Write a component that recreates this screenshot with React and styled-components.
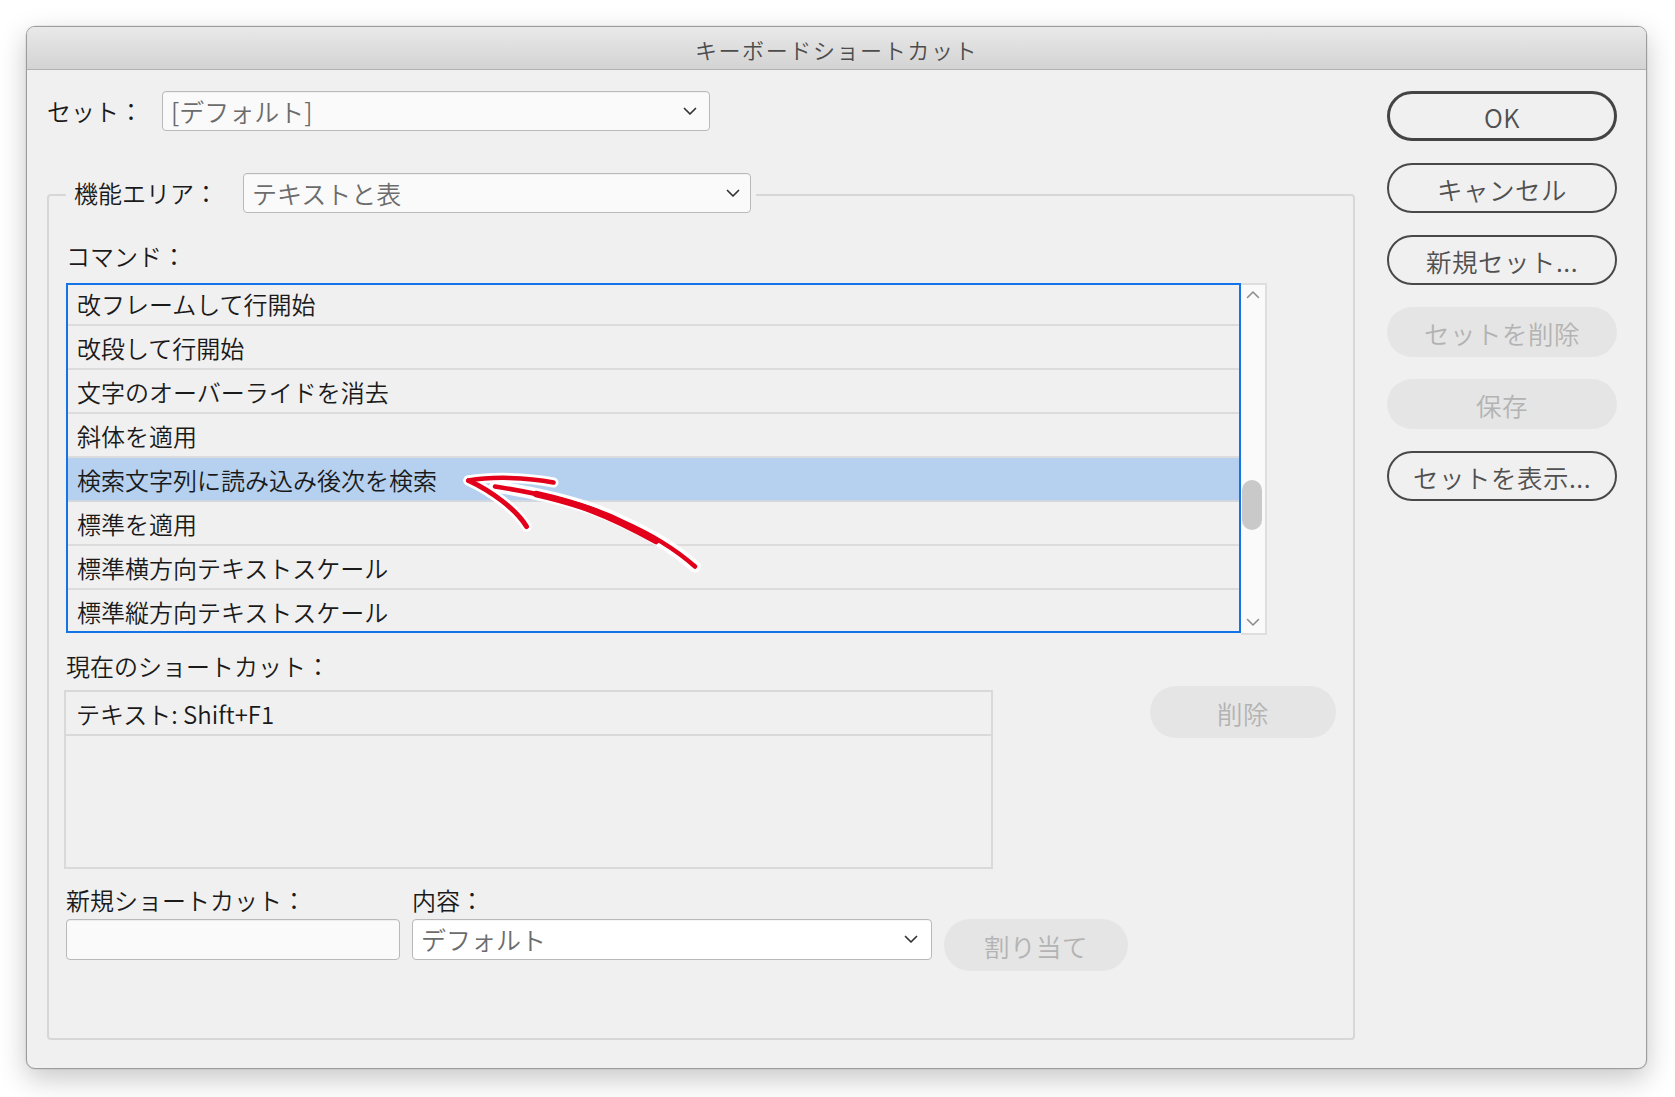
import React from "react";
import styled, { createGlobalStyle, css } from "styled-components";

const Global = createGlobalStyle`
  html, body { margin: 0; padding: 0; background: #ffffff; }
  body {
    font-family: "Noto Sans CJK JP", "Noto Sans", sans-serif;
    font-weight: 350;
    padding: 26px 0 0 26px;
    width: 1675px;
    height: 1097px;
    box-sizing: border-box;
    overflow: hidden;
  }
  * { box-sizing: border-box; }
`;

const Window = styled.div`
  width: 1621px;
  height: 1043px;
  border: 1px solid #9d9d9d;
  border-radius: 9px;
  overflow: hidden;
  background: #f0f0f0;
  box-shadow: 0 10px 28px rgba(0, 0, 0, 0.22), 0 0 0 0.5px rgba(0, 0, 0, 0.1);
  display: flex;
  flex-direction: column;
`;

const TitleBar = styled.div`
  height: 43px;
  flex: none;
  border-bottom: 1px solid #b1b1b1;
  background: linear-gradient(#e9e9e9, #d3d3d3);
  display: flex;
  align-items: center;
  justify-content: center;
  font-size: 22px;
  letter-spacing: 1.6px;
  color: #4c4c4c;
  padding-top: 1px;
`;

const Body = styled.div`
  flex: 1;
  display: flex;
  padding: 21px 29px 28px 20px;
`;

const MainCol = styled.div`
  width: 1308px;
  display: flex;
  flex-direction: column;
`;

const SideCol = styled.div`
  width: 230px;
  margin-left: 32px;
  display: flex;
  flex-direction: column;
  gap: 22px;
`;

const FieldRow = styled.div`
  display: flex;
  align-items: center;
  height: 40px;
`;

const Label = styled.span`
  font-size: 24px;
  line-height: 32px;
  color: #1a1a1a;
  white-space: nowrap;
  margin-right: ${(p) => p.$gap || 0}px;
`;

const SelectBox = styled.div`
  width: ${(p) => p.$w}px;
  height: ${(p) => p.$h || 40}px;
  background: ${(p) => (p.$white ? "#ffffff" : "#fafafa")};
  border: 1px solid #b9b9b9;
  border-radius: 4px;
  display: flex;
  align-items: center;
  padding: 0 ${(p) => p.$pr || 12}px 0 8px;
  font-size: 25px;
  color: #6c6c6c;
  box-shadow: inset 0 1px 0 rgba(0,0,0,0.04);
`;

const SelectText = styled.span`
  flex: 1;
  white-space: nowrap;
  line-height: 1;
`;

const Chevron = () => (
  <svg width="14" height="9" viewBox="0 0 14 9">
    <polyline points="1.5,1.5 7,7 12.5,1.5" fill="none" stroke="#333" strokeWidth="1.7" strokeLinecap="round" strokeLinejoin="round" />
  </svg>
);

const Group = styled.fieldset`
  flex: 1;
  margin: 42px 0 0 0;
  padding: 0 17px 0 17px;
  border: 2px solid #d7d7d7;
  border-radius: 4px;
  min-inline-size: 0;
  display: flex;
  flex-direction: column;
`;

const Legend = styled.legend`
  display: flex;
  align-items: center;
  padding: 0 5px 4px 8px;
  margin: 0;
`;

const SectionLabel = styled(Label)`
  display: block;
  margin-top: ${(p) => p.$mt}px;
`;

const ListArea = styled.div`
  position: relative;
  display: flex;
  margin-top: 11px;
  height: 352px;
`;

const ListBox = styled.div`
  width: 1175px;
  height: 350px;
  border: 2px solid #1473e6;
  overflow: hidden;
  background: #f0f0f0;
`;

const Rows = styled.div`
  margin-top: -3px;
`;

const Row = styled.div`
  height: 44px;
  border-bottom: 2px solid #dcdcdc;
  display: flex;
  align-items: center;
  padding-left: 9px;
  font-size: 24px;
  color: #1a1a1a;
  white-space: nowrap;
  ${(p) =>
    p.$selected &&
    css`
      background: #b6d1ef;
      border-bottom-color: #d3d8de;
    `}
`;

const Scrollbar = styled.div`
  width: 26px;
  height: 352px;
  background: #fafafa;
  border: 2px solid #dedede;
  border-left: none;
  display: flex;
  flex-direction: column;
  align-items: center;
  padding: 5px 0 6px;
`;

const Thumb = styled.div`
  width: 20px;
  height: 50px;
  border-radius: 10px;
  background: #c9c9c9;
  margin-top: 181px;
  margin-left: -2px;
`;

const ScrollSpacer = styled.div`
  flex: 1;
`;

const ArrowOverlay = styled.svg`
  position: absolute;
  left: 0;
  top: 0;
  width: 700px;
  height: 352px;
  overflow: visible;
  pointer-events: none;
`;

const ShortcutSection = styled.div`
  display: flex;
  align-items: flex-start;
`;

const ShortcutCol = styled.div`
  display: flex;
  flex-direction: column;
`;

const ShortcutBox = styled.div`
  width: 929px;
  height: 179px;
  margin-top: 8px;
  margin-left: -2px;
  border: 2px solid #d9d9d9;
`;

const ShortcutRow = styled.div`
  height: 44px;
  border-bottom: 2px solid #d9d9d9;
  display: flex;
  align-items: center;
  padding-left: 10px;
  font-size: 24px;
  color: #1a1a1a;
`;

const Pill = styled.div`
  width: ${(p) => p.$w || 230}px;
  height: ${(p) => p.$h || 50}px;
  border-radius: 26px;
  display: flex;
  align-items: center;
  justify-content: center;
  font-size: 25.5px;
  white-space: nowrap;
  letter-spacing: 0.5px;
  color: #505050;
  border: 2px solid #484848;
  background: transparent;
  ${(p) =>
    p.$primary &&
    css`
      border-width: 3.5px;
      border-color: #444;
    `}
  ${(p) =>
    p.$disabled &&
    css`
      border: none;
      background: #e5e5e5;
      color: #b3b3b3;
    `}
`;

const DeleteButton = styled(Pill)`
  margin-left: auto;
  margin-top: 51px;
`;

const NewGrid = styled.div`
  display: grid;
  grid-template-columns: 334px 520px 184px;
  column-gap: 12px;
  row-gap: 3px;
  margin-top: 15px;
  align-items: start;
`;

const TextInput = styled.div`
  height: 41px;
  border: 1px solid #b9b9b9;
  border-radius: 4px;
  background: #fafafa;
  box-shadow: inset 0 1px 0 rgba(0,0,0,0.05);
`;

const rows = [
  "改フレームして行開始",
  "改段して行開始",
  "文字のオーバーライドを消去",
  "斜体を適用",
  "検索文字列に読み込み後次を検索",
  "標準を適用",
  "標準横方向テキストスケール",
  "標準縦方向テキストスケール",
];

const Arrow = () => {
  const shaft = "M429,203.5 C470,210 520,220 556,238.5 C580,249 608,265 629,283.5";
  const upper = "M402.5,197.5 C425,193.5 460,194 487.5,199.5";
  const lower = "M402.5,197.5 C425,208 450,226 460.5,243.5";
  return (
    <ArrowOverlay viewBox="0 0 700 352">
      <g fill="none" stroke="#ffffff" strokeLinecap="round" strokeLinejoin="round">
        <path d={shaft} strokeWidth="12" />
        <path d={upper} strokeWidth="10" />
        <path d={lower} strokeWidth="10.5" />
      </g>
      <g fill="none" stroke="#e2001b" strokeLinecap="round" strokeLinejoin="round">
        <path d={shaft} strokeWidth="4.5" />
        <path d="M470,211 C510,220 540,230 590,258" strokeWidth="6.5" />
        <path d={upper} strokeWidth="4.5" />
        <path d={lower} strokeWidth="5" />
      </g>
    </ArrowOverlay>
  );
};

const ScrollChevron = ({ up }) => (
  <svg width="14" height="9" viewBox="0 0 14 9">
    <polyline
      points={up ? "1.5,7.5 7,2 12.5,7.5" : "1.5,1.5 7,7 12.5,1.5"}
      fill="none"
      stroke="#8d8d8d"
      strokeWidth="1.6"
      strokeLinecap="round"
      strokeLinejoin="round"
    />
  </svg>
);

export default function App() {
  return (
    <>
      <Global />
      <Window>
        <TitleBar>キーボードショートカット</TitleBar>
        <Body>
          <MainCol>
            <FieldRow>
              <Label $gap={19}>セット：</Label>
              <SelectBox $w={548} $pr={12}>
                <SelectText>[デフォルト]</SelectText>
                <Chevron />
              </SelectBox>
            </FieldRow>

            <Group>
              <Legend>
                <Label $gap={25}>機能エリア：</Label>
                <SelectBox $w={508} $pr={10}>
                  <SelectText>テキストと表</SelectText>
                  <Chevron />
                </SelectBox>
              </Legend>

              <SectionLabel $mt={23}>コマンド：</SectionLabel>
              <ListArea>
                <ListBox>
                  <Rows>
                    {rows.map((r, i) => (
                      <Row key={r} $selected={i === 4}>
                        {r}
                      </Row>
                    ))}
                  </Rows>
                </ListBox>
                <Scrollbar>
                  <ScrollChevron up />
                  <Thumb />
                  <ScrollSpacer />
                  <ScrollChevron />
                </Scrollbar>
                <Arrow />
              </ListArea>

              <ShortcutSection>
                <ShortcutCol>
                  <SectionLabel $mt={15}>現在のショートカット：</SectionLabel>
                  <ShortcutBox>
                    <ShortcutRow>テキスト: Shift+F1</ShortcutRow>
                  </ShortcutBox>
                </ShortcutCol>
                <DeleteButton $disabled $w={186} $h={52}>
                  削除
                </DeleteButton>
              </ShortcutSection>

              <NewGrid>
                <Label>新規ショートカット：</Label>
                <Label>内容：</Label>
                <span />
                <TextInput />
                <SelectBox $w={520} $h={41} $white $pr={13}>
                  <SelectText>デフォルト</SelectText>
                  <Chevron />
                </SelectBox>
                <Pill $disabled $w={184} $h={52}>
                  割り当て
                </Pill>
              </NewGrid>
            </Group>
          </MainCol>

          <SideCol>
            <Pill $primary>OK</Pill>
            <Pill>キャンセル</Pill>
            <Pill>新規セット...</Pill>
            <Pill $disabled>セットを削除</Pill>
            <Pill $disabled>保存</Pill>
            <Pill>セットを表示...</Pill>
          </SideCol>
        </Body>
      </Window>
    </>
  );
}
